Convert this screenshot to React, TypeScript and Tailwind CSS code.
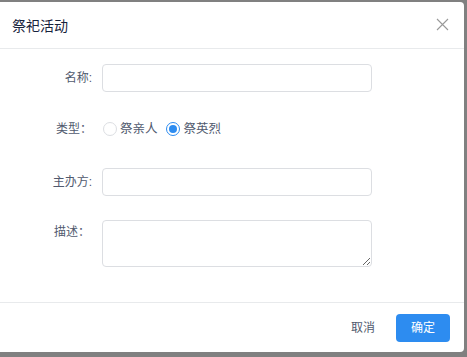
export default function App() {
  const font = { fontFamily: '"Liberation Sans", "Noto Sans CJK SC", sans-serif' }

  return (
    <div className="w-[467px] h-[357px] bg-[#808080] pt-[2px] overflow-hidden" style={font}>
      <div className="w-[464px] h-[350px] bg-white rounded-r-[4px] flex flex-col">
        <div className="h-[47px] border-b border-[#e8eaec] flex items-center justify-between pl-3 pr-[15px]">
          <span className="text-[14px] text-[#17233d] leading-none pt-[1px]">祭祀活动</span>
          <svg width="13" height="13" viewBox="0 0 13 13" className="mt-[-2px]">
            <path d="M1 1 L12 12 M12 1 L1 12" stroke="#999" strokeWidth="1.1" fill="none" />
          </svg>
        </div>

        <div className="flex-1 pt-[15px] text-[12px] text-[#515a6e]">
          <div className="flex items-center h-[28px]">
            <label className="w-[92px] text-right">名称:</label>
            <input className="ml-[10px] w-[270px] h-[28px] border border-[#dcdee2] rounded-[4px] outline-none" />
          </div>

          <div className="flex items-center h-[28px] mt-[23px]">
            <label className="w-[92px] text-right">类型：</label>
            <div className="ml-[11px] flex items-center">
              <span className="w-[14px] h-[14px] rounded-full border border-[#dcdee2] bg-white"></span>
              <span className="ml-[3px] text-[12.5px]">祭亲人</span>
              <span className="ml-[8px] w-[14px] h-[14px] rounded-full border border-[#2d8cf0] bg-white flex items-center justify-center">
                <span className="w-[8px] h-[8px] rounded-full bg-[#2d8cf0]"></span>
              </span>
              <span className="ml-[4px] text-[12.5px]">祭英烈</span>
            </div>
          </div>

          <div className="flex items-center h-[28px] mt-[25px]">
            <label className="w-[92px] text-right">主办方:</label>
            <input className="ml-[10px] w-[270px] h-[28px] border border-[#dcdee2] rounded-[4px] outline-none" />
          </div>

          <div className="flex items-start mt-[24px]">
            <label className="w-[90px] text-right leading-[20px] pt-[2px]">描述：</label>
            <textarea className="ml-[12px] w-[270px] h-[47px] border border-[#dcdee2] rounded-[4px] outline-none block"></textarea>
          </div>
        </div>

        <div className="h-[50px] border-t border-[#e8eaec] flex items-center justify-end pr-[14px]">
          <button className="h-[28px] px-[14px] text-[12px] text-[#515a6e]">取消</button>
          <button className="ml-[7px] h-[28px] w-[54px] rounded-[4px] bg-[#2d8cf0] text-white text-[12px]">确定</button>
        </div>
      </div>
    </div>
  )
}
